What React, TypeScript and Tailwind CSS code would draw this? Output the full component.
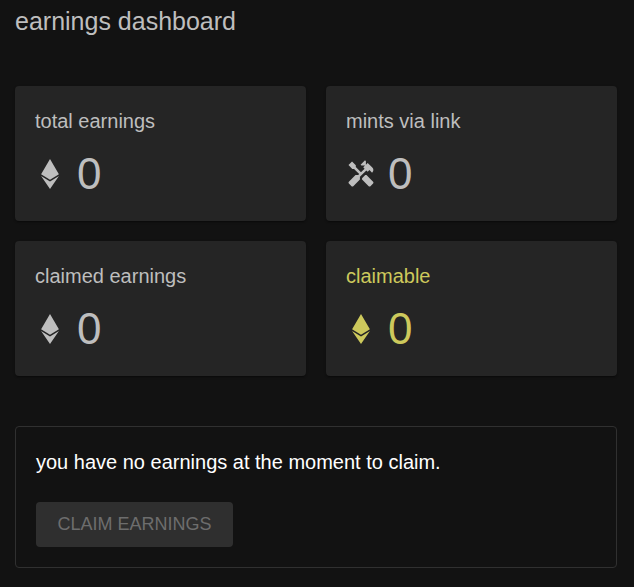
import { FaEthereum } from "react-icons/fa";
import { MdHandyman } from "react-icons/md";
import type { IconType } from "react-icons";

type Stat = {
  label: string;
  value: number;
  icon: IconType;
  highlight?: boolean;
};

const stats: Stat[] = [
  { label: "total earnings", value: 0, icon: FaEthereum },
  { label: "mints via link", value: 0, icon: MdHandyman },
  { label: "claimed earnings", value: 0, icon: FaEthereum },
  { label: "claimable", value: 0, icon: FaEthereum, highlight: true },
];

function StatCard({ label, value, icon: Icon, highlight }: Stat) {
  return (
    <div
      className={`rounded bg-[#252525] p-5 shadow-[0_2px_1px_-1px_rgba(0,0,0,0.2),0_1px_1px_0_rgba(0,0,0,0.14),0_1px_3px_0_rgba(0,0,0,0.12)] ${
        highlight ? "text-[#cdc95c]" : "text-[#bebebe]"
      }`}
    >
      <h2 className="text-xl leading-[30px]">{label}</h2>
      <div className="mt-2.5 flex items-center gap-3">
        <Icon size={30} aria-hidden="true" />
        <span className="text-[44px] leading-[55px]">{value}</span>
      </div>
    </div>
  );
}

export default function App() {
  const claimable = stats[3].value;

  return (
    <main className="min-h-screen bg-[#121212] pr-[17px] pb-5 pl-[15px] font-['Liberation_Sans',Arial,sans-serif]">
      <h1 className="pt-1 text-[25px] leading-[34px] text-[#bebebe]">earnings dashboard</h1>

      {/* Stats */}
      <section className="mt-12 grid grid-cols-2 gap-5">
        {stats.map((stat) => (
          <StatCard key={stat.label} {...stat} />
        ))}
      </section>

      {/* Claim */}
      <section className="mt-[50px] rounded border border-[#303030] p-5">
        <p className="text-xl leading-[30px] text-white">
          you have no earnings at the moment to claim.
        </p>
        <button
          type="button"
          disabled={claimable === 0}
          className="mt-[25px] block min-w-[197px] rounded bg-[#2f2f2f] px-5 py-2 text-lg leading-[29px] text-[#6d6d6d] uppercase"
        >
          claim earnings
        </button>
      </section>
    </main>
  );
}
